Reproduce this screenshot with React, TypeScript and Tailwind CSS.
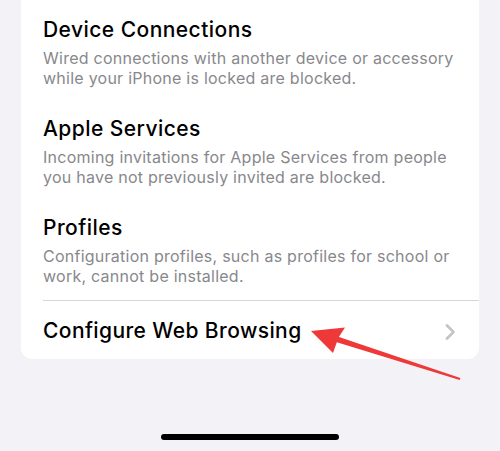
import React from "react";

const items = [
  {
    title: "Device Connections",
    lines: ["Wired connections with another device or accessory", "while your iPhone is locked are blocked."],
  },
  {
    title: "Apple Services",
    lines: ["Incoming invitations for Apple Services from people", "you have not previously invited are blocked."],
  },
  {
    title: "Profiles",
    lines: ["Configuration profiles, such as profiles for school or", "work, cannot be installed."],
  },
];

export default function App() {
  return (
    <div
      className="relative w-[500px] h-[451px] overflow-hidden bg-[#f2f2f7]"
      style={{ fontFamily: 'Inter, "Noto Sans", sans-serif' }}
    >
      <div className="mx-[21px] bg-white rounded-b-[11px] pt-[17px]">
        <div className="flex flex-col gap-[28px] pl-[22px] pr-[10px]">
          {items.map((it) => (
            <div key={it.title} className="flex flex-col">
              <div className="text-[21px] leading-[26px] text-black font-medium tracking-[0.45px]">{it.title}</div>
              <div className="mt-[5px] text-[16px] leading-[20px] text-[#88888c] tracking-[0.25px] whitespace-nowrap">
                {it.lines.map((l) => (
                  <div key={l}>{l}</div>
                ))}
              </div>
            </div>
          ))}
        </div>
        <div className="ml-[22px] mt-[14px] h-px bg-[#d6d6da]" />
        <div className="flex items-center justify-between pl-[22px] pr-[23px] pt-[17px] pb-[15px]">
          <div className="text-[21px] leading-[26px] text-black font-medium tracking-[0.4px]">Configure Web Browsing</div>
          <svg width="11" height="16" viewBox="0 0 11 16" className="mt-[1px]">
            <path d="M2 1.5 L8.5 8 L2 14.5" fill="none" stroke="#c4c4c7" strokeWidth="2.6" strokeLinecap="round" strokeLinejoin="round" />
          </svg>
        </div>
      </div>
      <div className="flex justify-center mt-[75px]">
        <div className="w-[178px] h-[6px] rounded-full bg-black" />
      </div>
      <svg className="absolute inset-0 pointer-events-none" width="500" height="451" viewBox="0 0 500 451">
        <polygon points="311,331 345,327.5 338.5,337.5 333,353" fill="#ef3838" />
        <polygon points="336.8,336.2 460.3,378 459.7,380 335.2,341.8" fill="#ef3838" />
      </svg>
    </div>
  );
}
